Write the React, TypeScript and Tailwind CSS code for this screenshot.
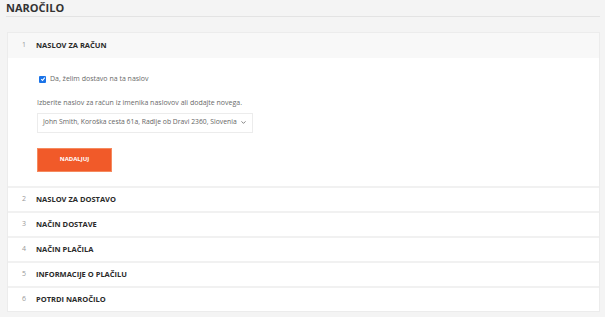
import { ChevronDown } from "lucide-react";

const steps = [
  { n: 2, label: "NASLOV ZA DOSTAVO" },
  { n: 3, label: "NAČIN DOSTAVE" },
  { n: 4, label: "NAČIN PLAČILA" },
  { n: 5, label: "INFORMACIJE O PLAČILU" },
  { n: 6, label: "POTRDI NAROČILO" },
];

function StepHead({ n, label }: { n: number; label: string }) {
  return (
    <div className="flex items-center h-full pl-[14px]">
      <span className="w-[14px] text-[7px] text-[#999]">{n}</span>
      <span className="text-[7.5px] font-bold text-[#2a2a2a]">{label}</span>
    </div>
  );
}

export default function App() {
  return (
    <div className="w-[605px] min-h-[317px] bg-[#f4f4f4] pl-[6px] pr-[5px] font-['Open_Sans',sans-serif]">
      <h1 className="pt-[1px] pb-[1px] text-[11px] leading-[14px] font-bold text-[#333] border-b border-[#e3e3e3]">
        NAROČILO
      </h1>

      <div className="mt-[15px] ml-[1px] bg-white border-t border-x border-b border-[#ececec]">
        <div className="h-[25px] bg-[#f8f8f8]">
          <StepHead n={1} label="NASLOV ZA RAČUN" />
        </div>

        <div className="h-[128px] pl-[29px] pt-[16px]">
          <label className="flex items-center gap-[4px] pl-[2px]">
            <span className="flex items-center justify-center w-[7px] h-[7px] rounded-[1px] bg-[#1a73e8]">
              <svg viewBox="0 0 10 10" className="w-[6px] h-[6px]">
                <path d="M2 5.2 L4.2 7.3 L8 2.8" fill="none" stroke="white" strokeWidth="1.8" />
              </svg>
            </span>
            <span className="text-[7px] text-[#6a6a6a]">Da, želim dostavo na ta naslov</span>
          </label>

          <p className="mt-[13px] text-[7px] leading-[10px] text-[#6a6a6a]">
            Izberite naslov za račun iz imenika naslovov ali dodajte novega.
          </p>

          <div className="mt-[5px] flex items-center justify-between w-[216px] h-[20px] pl-[5px] pr-[5px] border border-[#ececec] text-[6.8px] text-[#666] whitespace-nowrap">
            <span>John Smith, Koroška cesta 61a, Radlje ob Dravi 2360, Slovenia</span>
            <ChevronDown className="w-[7px] h-[7px] text-[#555] shrink-0" strokeWidth={2.5} />
          </div>

          <button className="mt-[15px] w-[75px] h-[24px] bg-[#f15a29] text-white text-[6px] font-bold border border-[#f58a5e]">
            NADALJUJ
          </button>
        </div>

        {steps.map((s) => (
          <div key={s.n} className="h-[25px] border-t-2 border-[#f1f1f1]">
            <StepHead n={s.n} label={s.label} />
          </div>
        ))}
      </div>
    </div>
  );
}
